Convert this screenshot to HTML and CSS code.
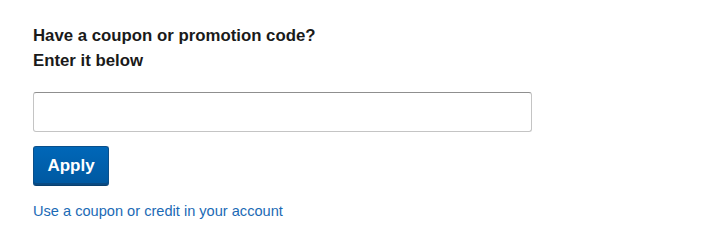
FILE: index.html
```html
<!DOCTYPE html>
<html>
<head>
<meta charset="utf-8">
<link rel="stylesheet" href="styles.css">
</head>
<body>
<div class="coupon">
  <h2 class="title">Have a coupon or promotion code?<br>Enter it below</h2>
  <input class="code-input" type="text" aria-label="Coupon code">
  <button class="apply-btn" type="button">Apply</button>
  <a class="account-link" href="#">Use a coupon or credit in your account</a>
</div>
</body>
</html>
```
FILE: styles.css
```css
html, body {
  margin: 0;
  padding: 0;
  background: #ffffff;
}
.coupon {
  display: flex;
  flex-direction: column;
  align-items: flex-start;
  padding: 23px 0 0 33px;
  font-family: "Liberation Sans", Arial, sans-serif;
}
.title {
  margin: 0;
  font-size: 16.8px;
  font-weight: bold;
  line-height: 25px;
  color: #1a1a1a;
}
.code-input {
  box-sizing: border-box;
  margin-top: 19px;
  width: 499px;
  height: 40px;
  border: 1px solid #c4c4c4;
  border-top-color: #8f8f8f;
  border-radius: 3px;
  background: #fff;
  padding: 0 8px;
  font-size: 14px;
}
.apply-btn {
  box-sizing: border-box;
  margin-top: 14px;
  width: 76px;
  height: 40px;
  border: 1px solid #0a4f8a;
  border-bottom-color: #083f6e;
  border-radius: 3px;
  background: linear-gradient(#0067b8, #0058a0);
  box-shadow: inset 0 -2px 0 #0a4a82;
  color: #ffffff;
  font-family: "Liberation Sans", Arial, sans-serif;
  font-size: 17px;
  font-weight: bold;
  padding: 0;
}
.account-link {
  margin-top: 16px;
  font-size: 14.6px;
  line-height: 18px;
  color: #1b6ab5;
  text-decoration: none;
}
```
